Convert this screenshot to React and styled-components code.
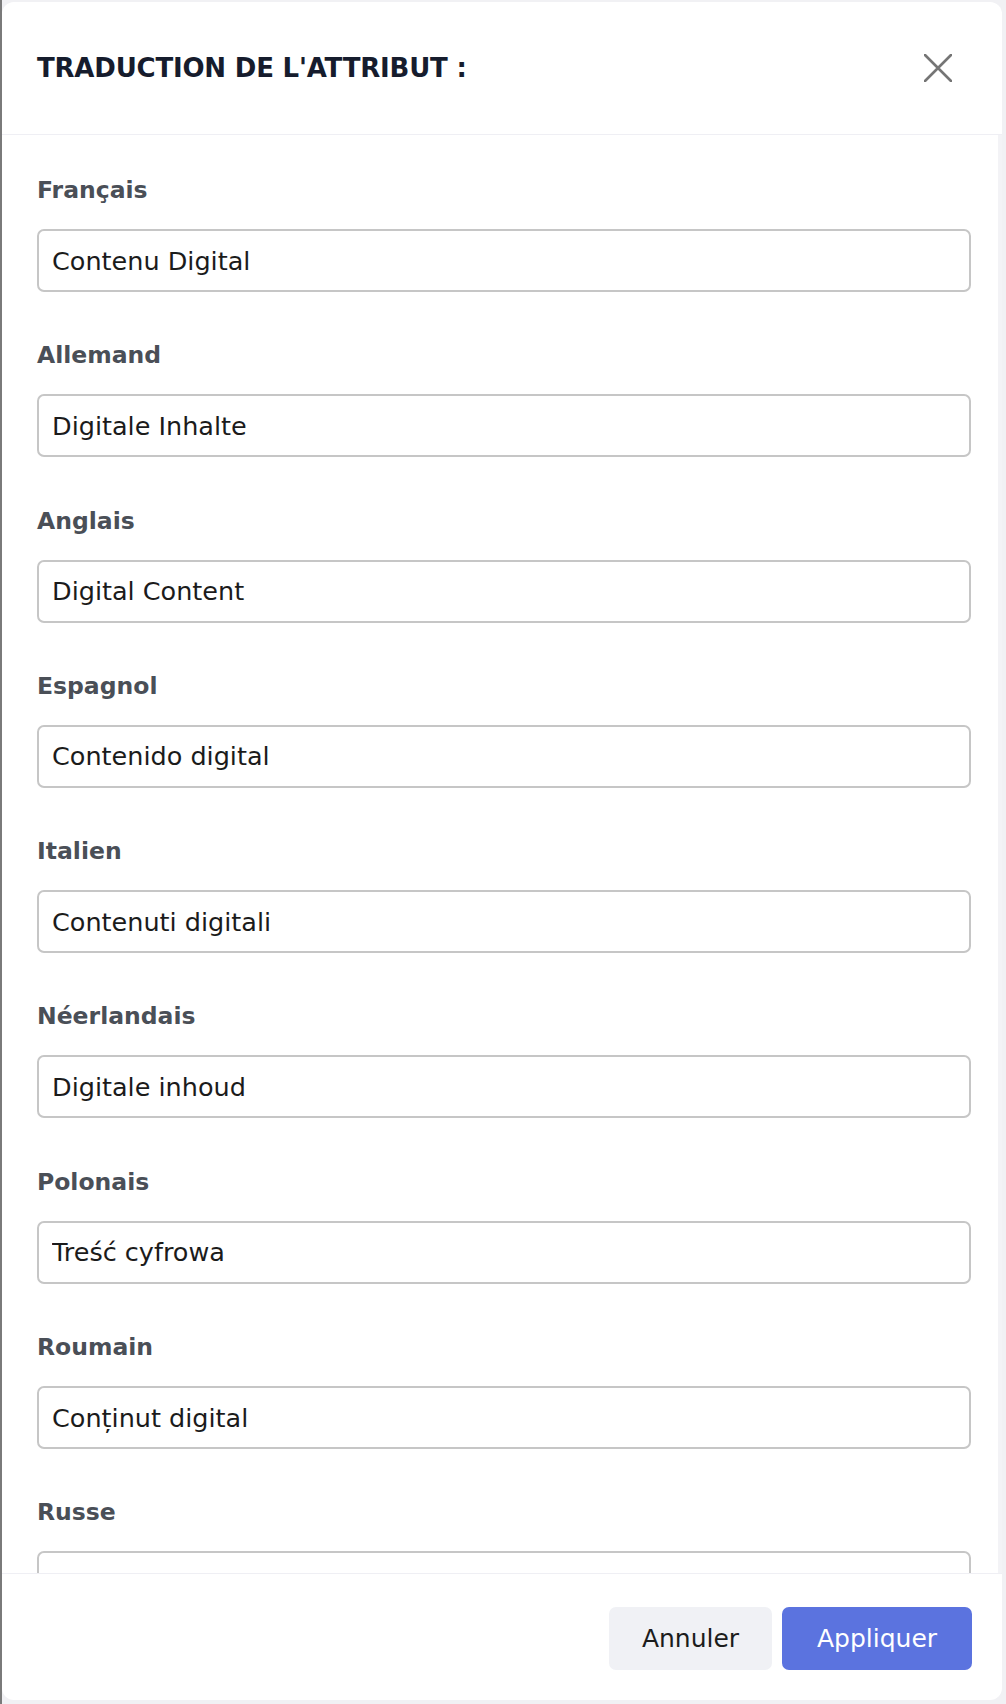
import React from "react";
import styled, { createGlobalStyle } from "styled-components";

const Global = createGlobalStyle`
  html, body { margin: 0; padding: 0; }
  body {
    background: linear-gradient(to right, #7a7a7a 0 2px, #f1f1f4 2px);
    font-family: "DejaVu Sans", "Liberation Sans", sans-serif;
  }
  * { box-sizing: border-box; }
`;

const Dialog = styled.div`
  display: flex;
  flex-direction: column;
  height: 1698px;
  margin: 2px 4px 4px 2px;
  background: #ffffff;
  border-radius: 12px;
  overflow: hidden;
`;

const Header = styled.header`
  display: flex;
  align-items: center;
  justify-content: space-between;
  height: 133px;
  padding: 0 50px 0 35px;
  border-bottom: 1px solid #efeff4;
  flex-shrink: 0;
`;

const Title = styled.h2`
  margin: 0;
  font-family: "DejaVu Sans", "Liberation Sans", sans-serif;
  font-weight: 700;
  font-size: 26px;
  letter-spacing: -0.2px;
  color: #161c2d;
`;

const CloseButton = styled.button`
  border: 0;
  background: transparent;
  padding: 0;
  width: 28px;
  height: 28px;
  display: flex;
  align-items: center;
  justify-content: center;
  cursor: pointer;
`;

const Body = styled.div`
  flex: 1;
  overflow: hidden;
  padding: 38px 27px 0 35px;
  border-right: 4px solid #f3f3f6;
  display: flex;
  flex-direction: column;
  gap: 46.3px;
`;

const Field = styled.div`
  display: flex;
  flex-direction: column;
`;

const Label = styled.label`
  font-family: "DejaVu Sans", "Liberation Sans", sans-serif;
  font-weight: 700;
  font-size: 23.5px;
  line-height: 34px;
  color: #4a4f57;
  margin-bottom: 22px;
`;

const Input = styled.input`
  width: 100%;
  height: 63px;
  border: 2px solid #c6c6c6;
  border-radius: 7px;
  padding: 0 13px;
  font-family: "DejaVu Sans", "Liberation Sans", sans-serif;
  font-size: 25.5px;
  color: #1b1b1b;
  background: #fff;
  outline: none;
`;

const Footer = styled.footer`
  display: flex;
  justify-content: flex-end;
  gap: 10px;
  padding: 33px 30px 30px;
  border-top: 1px solid #efeff4;
  flex-shrink: 0;
`;

const Button = styled.button`
  height: 63px;
  padding: 0 32px;
  border: 0;
  border-radius: 7px;
  font-family: "DejaVu Sans", "Liberation Sans", sans-serif;
  font-size: 25px;
  cursor: pointer;
  background: ${(p) => (p.$primary ? "#5b73df" : "#f0f1f5")};
  color: ${(p) => (p.$primary ? "#ffffff" : "#1c1c1c")};
  min-width: ${(p) => (p.$primary ? "190px" : "163px")};
`;

const fields = [
  ["Français", "Contenu Digital"],
  ["Allemand", "Digitale Inhalte"],
  ["Anglais", "Digital Content"],
  ["Espagnol", "Contenido digital"],
  ["Italien", "Contenuti digitali"],
  ["Néerlandais", "Digitale inhoud"],
  ["Polonais", "Treść cyfrowa"],
  ["Roumain", "Conținut digital"],
  ["Russe", "Цифровой контент"],
];

export default function App() {
  return (
    <>
      <Global />
      <Dialog>
        <Header>
          <Title>TRADUCTION DE L'ATTRIBUT :</Title>
          <CloseButton aria-label="Fermer">
            <svg width="28" height="28" viewBox="0 0 28 28">
              <path
                d="M1 1 L27 27 M27 1 L1 27"
                stroke="#757575"
                strokeWidth="2.6"
                strokeLinecap="round"
              />
            </svg>
          </CloseButton>
        </Header>
        <Body>
          {fields.map(([label, value]) => (
            <Field key={label}>
              <Label>{label}</Label>
              <Input defaultValue={value} readOnly />
            </Field>
          ))}
        </Body>
        <Footer>
          <Button>Annuler</Button>
          <Button $primary>Appliquer</Button>
        </Footer>
      </Dialog>
    </>
  );
}
